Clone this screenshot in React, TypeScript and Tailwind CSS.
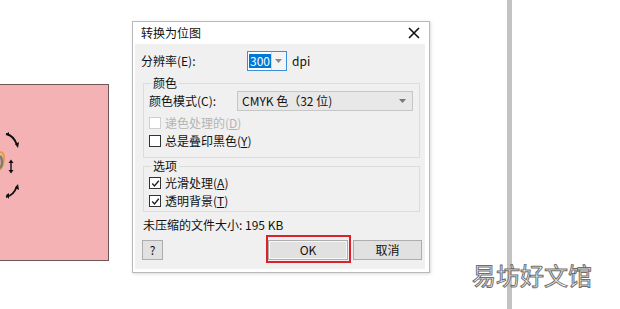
import React from 'react';

const font = { fontFamily: '"Noto Sans CJK SC", "Noto Sans", sans-serif' };

const CheckBox = ({
  label,
  hotkey,
  checked,
  disabled,
}: {
  label: string;
  hotkey: string;
  checked?: boolean;
  disabled?: boolean;
}) => {
  return (
    <div className="flex items-center h-[18px]">
      <span
        className={`w-[12px] h-[12px] border flex items-center justify-center bg-white ${
          disabled ? 'border-[#cfcfcf]' : 'border-[#333]'
        }`}
      >
        {checked && (
          <svg width="9" height="9" viewBox="0 0 9 9">
            <path d="M1.2 4.6 L3.5 7 L7.8 1.8" fill="none" stroke="#222" strokeWidth="1.4" />
          </svg>
        )}
      </span>
      <span className={`ml-[4px] text-[12px] ${disabled ? 'text-[#b4b4b4]' : 'text-[#111]'}`}>
        {label}(<span className="underline">{hotkey}</span>)
      </span>
    </div>
  );
};

const Group = ({ title, children, className }: { title: string; children: React.ReactNode; className?: string }) => {
  return (
    <fieldset className={`border border-[#dcdcdc] ml-[8px] mr-[5px] ${className ?? ''}`}>
      <legend className="ml-[7px] px-[2px] text-[12px] leading-[14px] text-[#111]">{title}</legend>
      {children}
    </fieldset>
  );
};

const Button = ({ children, className }: { children: React.ReactNode; className?: string }) => {
  return (
    <div
      className={`h-[20px] flex items-center justify-center border border-[#adadad] bg-[#e1e1e1] text-[12px] text-[#111] ${
        className ?? ''
      }`}
    >
      {children}
    </div>
  );
};

const ConvertDialog = () => {
  return (
    <div
      className="absolute left-[132px] top-[21px] w-[298px] h-[252px] bg-white border border-[#b9b9b9] flex flex-col shadow-[1px_1px_3px_rgba(0,0,0,0.15)]"
      style={font}
    >
      <header className="h-[22px] flex items-center justify-between pl-[8px] pr-[9px]">
        <span className="text-[12px] text-[#111]">转换为位图</span>
        <svg width="12" height="12" viewBox="0 0 12 12">
          <path d="M1 1 L11 11 M11 1 L1 11" stroke="#111" strokeWidth="1.6" />
        </svg>
      </header>
      <div className="flex-1 bg-[#f0f0f0] ml-[2px] mr-[4px] mb-[3px] flex flex-col">
        <div className="flex items-center h-[20px] mt-[7px] pl-[6px]">
          <span className="w-[106px] text-[12px] text-[#111]">分辨率(E):</span>
          <div className="w-[40px] h-[20px] border border-[#3b8edb] bg-white flex">
            <div className="flex-1 flex items-center pl-[1px]">
              <span className="bg-[#0078d7] text-white text-[12px] leading-[14px] px-[1px]">300</span>
            </div>
            <div className="w-[17px] border-l border-[#c8d9ea] bg-[#f4f4f4] flex items-center justify-center">
              <svg width="7" height="4" viewBox="0 0 7 4">
                <path d="M0 0 L7 0 L3.5 4 Z" fill="#888" />
              </svg>
            </div>
          </div>
          <span className="ml-[5px] text-[12px] text-[#111]">dpi</span>
        </div>

        <Group title="颜色" className="mt-[5px] h-[82px]">
          <div className="flex items-center pl-[5px] mt-[1px] h-[20px]">
            <span className="w-[88px] text-[12px] text-[#111]">颜色模式(C):</span>
            <div className="w-[176px] h-[20px] border border-[#c6c6c6] bg-[#e8e8e8] flex items-center justify-between pl-[4px] pr-[6px]">
              <span className="text-[12px] text-[#111]">CMYK 色（32 位)</span>
              <svg width="7" height="4" viewBox="0 0 7 4">
                <path d="M0 0 L7 0 L3.5 4 Z" fill="#777" />
              </svg>
            </div>
          </div>
          <div className="pl-[5px] mt-[3px]">
            <CheckBox label="递色处理的" hotkey="D" disabled />
            <CheckBox label="总是叠印黑色" hotkey="Y" />
          </div>
        </Group>

        <Group title="选项" className="mt-[1px] h-[53px]">
          <div className="pl-[5px] mt-[1px]">
            <CheckBox label="光滑处理" hotkey="A" checked />
            <CheckBox label="透明背景" hotkey="T" checked />
          </div>
        </Group>

        <div className="pl-[8px] mt-[4px] h-[18px] flex items-center text-[12px] text-[#111]">
          未压缩的文件大小: 195 KB
        </div>

        <div className="flex items-center pl-[7px] mt-[6px]">
          <Button className="w-[21px]">?</Button>
          <div className="relative ml-[105px]">
            <Button className="w-[80px] border-[#8a8a8a] shadow-[inset_0_0_0_1px_#f7f7f7]">OK</Button>
            <div className="absolute left-[-2px] right-[-3px] top-[-5px] bottom-[-3px] border-2 border-[#d8232f]" />
          </div>
          <Button className="ml-[5px] w-[69px]">取消</Button>
        </div>
      </div>
    </div>
  );
};

const CanvasShape = () => {
  return (
    <div className="absolute left-0 top-[84px] w-[109px] h-[177px] bg-[#f4b2b4] border border-[#6e5656] border-l-0">
      <svg className="absolute left-0 top-[45px]" width="22" height="72" viewBox="0 0 22 72">
        <path d="M0 22 C2 22 4 24 4 28 C4 32 3 36 0 40" fill="none" stroke="#e0a040" strokeWidth="2" />
        <path d="M0 26 C1.5 27 2 30 2 33 C2 35 1 37 0 38" fill="none" stroke="#7d7d6c" strokeWidth="2.5" />
        <path d="M6 4 C11 5 15 9 17 15" fill="none" stroke="#111" strokeWidth="1.8" />
        <path d="M15 14 L18 18 L19 12 Z" fill="#111" />
        <path d="M6 4 L9 2 L9 6 Z" fill="#111" />
        <path d="M11 31 L11 42" stroke="#111" strokeWidth="1.4" />
        <path d="M8.5 33 L11 29.5 L13.5 33 Z M8.5 40 L11 43.5 L13.5 40 Z" fill="#111" />
        <path d="M17 56 C15 62 11 66 6 67" fill="none" stroke="#111" strokeWidth="1.8" />
        <path d="M15 58 L18 54 L19 60 Z" fill="#111" />
        <path d="M6 65 L9 63 L9 69 Z" fill="#111" />
      </svg>
    </div>
  );
};

export default function App() {
  return (
    <div className="relative w-[620px] h-[309px] bg-white overflow-hidden" style={font}>
      <CanvasShape />
      <ConvertDialog />
      <div className="absolute left-[507px] top-0 w-[5px] h-[309px] bg-[#c3c3c3]" />
      <div
        className="absolute left-[472px] top-[260px] text-[24px] leading-[30px] text-white tracking-[0px] [-webkit-text-stroke:1px_#6f6f6f]"
        style={font}
      >
        易坊好文馆
      </div>
    </div>
  );
}
